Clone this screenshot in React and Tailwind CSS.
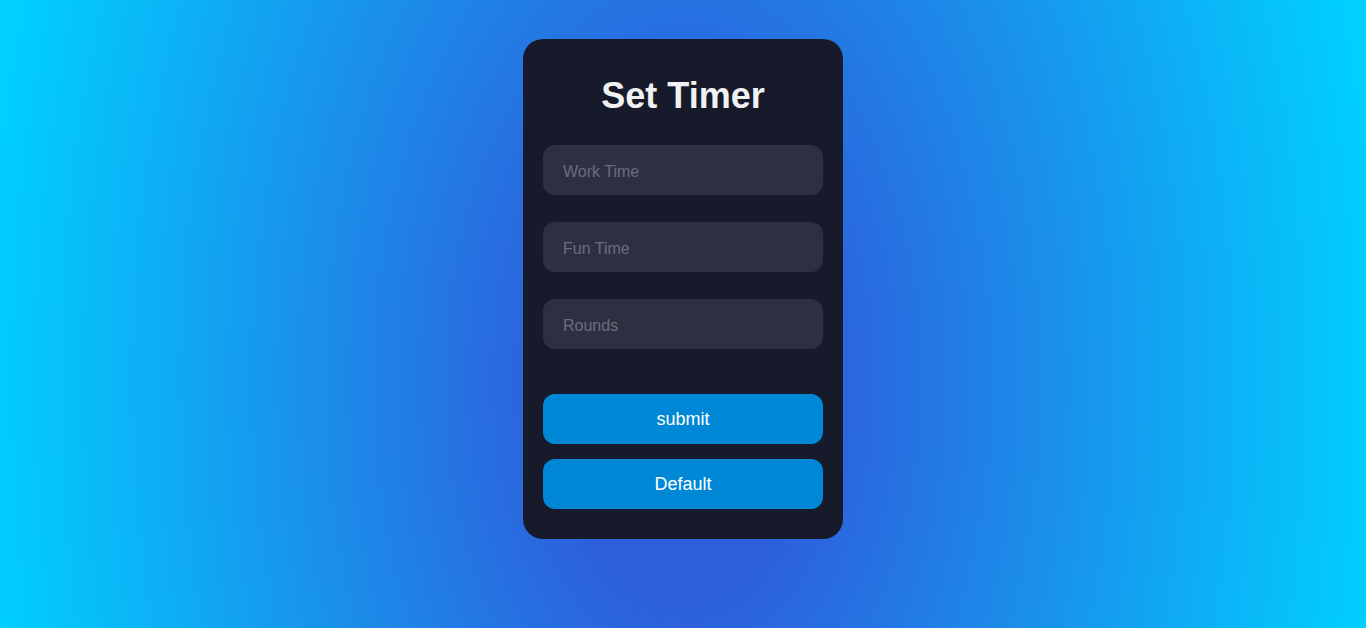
export default function App() {
  const fields = ["Work Time", "Fun Time", "Rounds"];

  return (
    <div className="flex h-[628px] w-full justify-center bg-[radial-gradient(ellipse_780px_1300px_at_683px_380px,#2d60dc_17%,#00d0ff_90%)] pt-[39px] font-['Liberation_Sans',Arial,sans-serif]">
      <div className="flex h-[500px] w-[320px] flex-col rounded-[20px] bg-[#171a2b] px-5 pt-[36px]">
        <h1 className="text-center text-[36px] font-bold leading-[41px] text-[#f1f1f3]">
          Set Timer
        </h1>

        <div className="mt-[29px] flex flex-col gap-[27px]">
          {fields.map((f) => (
            <input
              key={f}
              type="text"
              placeholder={f}
              className="h-[50px] w-full rounded-xl bg-[#2e3042] px-5 pt-1 text-base text-white outline-none placeholder:text-[#6a6c80]"
            />
          ))}
        </div>

        <div className="mt-[45px] flex flex-col gap-[15px]">
          <button className="h-[50px] w-full rounded-xl bg-[#0088d6] text-lg text-white">
            submit
          </button>
          <button className="h-[50px] w-full rounded-xl bg-[#0088d6] text-lg text-white">
            Default
          </button>
        </div>
      </div>
    </div>
  );
}
